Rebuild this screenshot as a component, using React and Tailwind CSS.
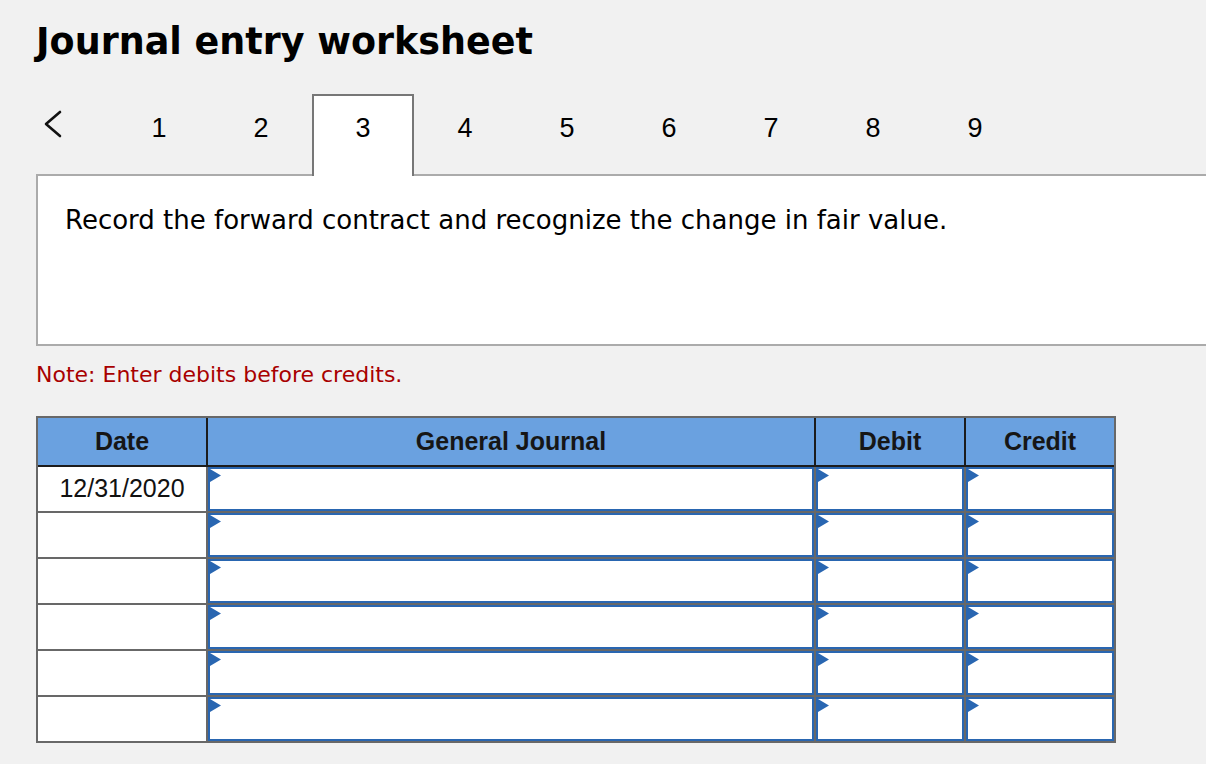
import React from "react";

const tabs = [1, 2, 3, 4, 5, 6, 7, 8, 9];
const rows = ["12/31/2020", "", "", "", "", ""];

const Flag = () => (
  <svg
    className="absolute left-0 top-0"
    width="11"
    height="13"
    viewBox="0 0 11 13"
  >
    <polygon points="0,0 11,6.5 0,13" fill="#2966b1" />
  </svg>
);

const InputCell = () => (
  <div className="relative bg-white border-2 border-[#2966b1]">
    <Flag />
  </div>
);

const App = () => {
  const active = 3;

  return (
    <div className="w-[1206px] h-[764px] overflow-hidden bg-[#f1f1f1] pl-[36px] font-['DejaVu_Sans',sans-serif] text-black">
      {/* Title */}
      <h1 className="pt-[20px] text-[36.5px] leading-[44px] font-bold">
        Journal entry worksheet
      </h1>

      {/* Tabs */}
      <div className="relative z-10 mt-[30px] flex h-[82px] font-['Liberation_Sans',Arial,sans-serif]">
        <button className="w-[72px] pl-[7px] pt-[15px] flex items-start">
          <svg width="20" height="30" viewBox="0 0 20 30">
            <polyline
              points="17,3 3,15 17,27"
              fill="none"
              stroke="#111"
              strokeWidth="2.6"
              strokeLinecap="round"
              strokeLinejoin="round"
            />
          </svg>
        </button>
        {tabs.map((t) => (
          <div
            key={t}
            className={
              t === active
                ? "w-[102px] h-[82px] border-2 border-b-0 border-[#777] bg-white text-center pt-[17px] text-[27px] leading-[30px]"
                : "w-[102px] h-[82px] border-2 border-b-0 border-transparent text-center pt-[17px] text-[27px] leading-[30px]"
            }
          >
            {t}
          </div>
        ))}
      </div>

      {/* Question panel */}
      <div className="-mt-[2px] w-[1200px] h-[172px] bg-white border-2 border-[#ababab] pl-[27px] pt-[29px]">
        <p className="text-[26px] leading-[30px]">
          Record the forward contract and recognize the change in fair value.
        </p>
      </div>

      <p className="mt-[16px] text-[22px] leading-[26px] text-[#a80000]">
        Note: Enter debits before credits.
      </p>

      {/* Journal table */}
      <div className="mt-[28px] w-[1080px] border-2 border-[#686868] bg-[#686868] font-['Liberation_Sans',Arial,sans-serif]">
        <div className="grid grid-cols-[168px_606px_148px_148px] gap-x-[2px] bg-[#1c1c1c] border-b-2 border-[#1c1c1c] text-[25px] font-bold text-[#161616]">
          {["Date", "General Journal", "Debit", "Credit"].map((h) => (
            <div
              key={h}
              className="h-[47px] bg-[#6aa1e0] flex items-center justify-center"
            >
              {h}
            </div>
          ))}
        </div>
        <div className="grid grid-cols-[168px_606px_148px_148px] auto-rows-[44px] gap-[2px]">
          {rows.map((d, i) => (
            <React.Fragment key={i}>
              <div className="bg-white flex items-center justify-center text-[25px] text-[#111]">
                {d}
              </div>
              <InputCell />
              <InputCell />
              <InputCell />
            </React.Fragment>
          ))}
        </div>
      </div>
    </div>
  );
};

export default App;
